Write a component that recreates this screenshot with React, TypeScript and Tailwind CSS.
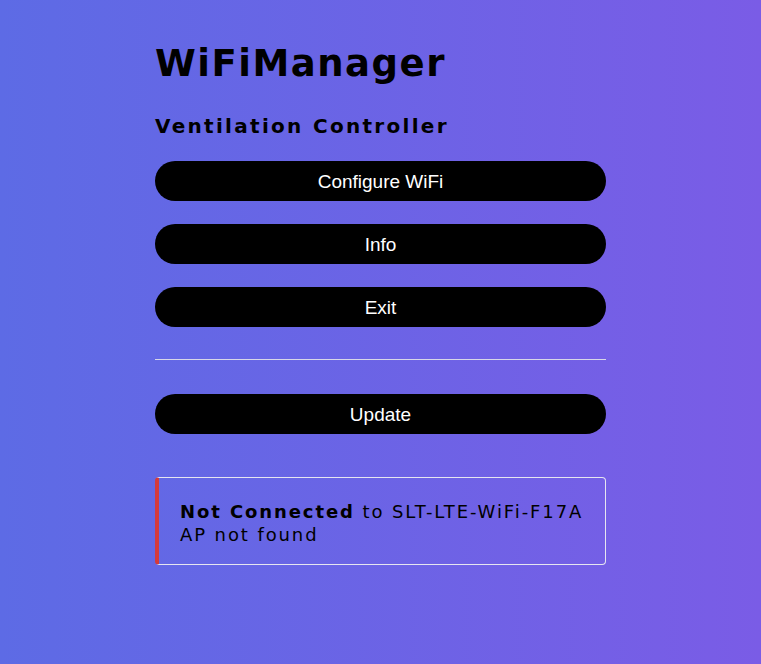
export default function App() {
  const btn =
    "w-full h-10 rounded-full bg-black text-white text-[19px] leading-none flex items-center justify-center";
  return (
    <div className="min-h-[664px] bg-[linear-gradient(90deg,#5d6be5,#7a5ce6)] flex justify-center font-['DejaVu_Sans',sans-serif] text-black">
      <div className="w-[451px] pt-[40px]">
        <h1 className="text-[37px] font-bold leading-[48px] tracking-[1.5px]">WiFiManager</h1>
        <h3 className="mt-[25px] text-[20px] font-bold leading-[26px] tracking-[2.3px]">Ventilation Controller</h3>
        <div className="mt-[22px] flex flex-col gap-[23px] font-['Liberation_Sans',sans-serif]">
          <button className={btn}>Configure WiFi</button>
          <button className={btn}>Info</button>
          <button className={btn}>Exit</button>
        </div>
        <hr className="mt-[32px] border-0 border-t border-[#d8d8e8]" />
        <div className="mt-[34px] font-['Liberation_Sans',sans-serif]">
          <button className={btn}>Update</button>
        </div>
        <div className="mt-[43px] h-[88px] rounded-[4px] border border-[#e6e6f0] border-l-[4px] border-l-[#d43a3a] pl-[21px] pt-[22px] text-[18px] leading-[23px] tracking-[1.9px]">
          <div>
            <strong>Not Connected</strong> to SLT-LTE-WiFi-F17A
          </div>
          <div>AP not found</div>
        </div>
      </div>
    </div>
  );
}
